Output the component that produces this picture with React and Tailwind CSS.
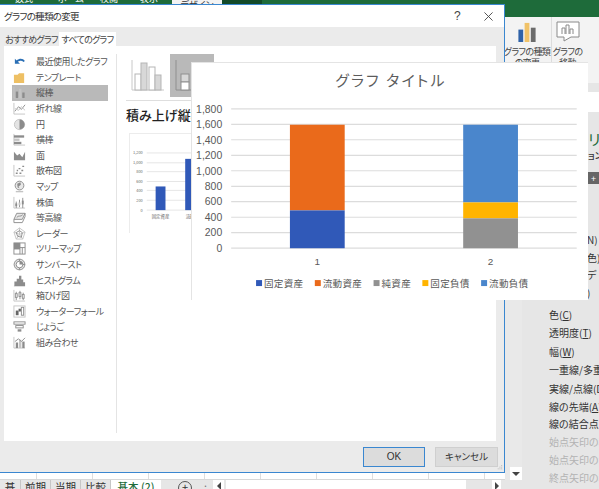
const jp = "font-['Noto_Sans_CJK_JP','Liberation_Sans',sans-serif] [font-feature-settings:'palt']"

const chartTypes = [
  { label: '最近使用したグラフ', icon: 'recent' },
  { label: 'テンプレート', icon: 'folder' },
  { label: '縦棒', icon: 'column', active: true },
  { label: '折れ線', icon: 'line' },
  { label: '円', icon: 'pie' },
  { label: '横棒', icon: 'bar' },
  { label: '面', icon: 'area' },
  { label: '散布図', icon: 'scatter' },
  { label: 'マップ', icon: 'map' },
  { label: '株価', icon: 'stock' },
  { label: '等高線', icon: 'contour' },
  { label: 'レーダー', icon: 'radar' },
  { label: 'ツリーマップ', icon: 'tree' },
  { label: 'サンバースト', icon: 'sun' },
  { label: 'ヒストグラム', icon: 'hist' },
  { label: '箱ひげ図', icon: 'box' },
  { label: 'ウォーターフォール', icon: 'water' },
  { label: 'じょうご', icon: 'funnel' },
  { label: '組み合わせ', icon: 'combo' },
]

const panelLabels = [
  { before: '色(', hot: 'C', after: ')', mt: 'mt-0' },
  { before: '透明度(', hot: 'T', after: ')', mt: 'mt-[4px]' },
  { before: '幅(', hot: 'W', after: ')', mt: 'mt-[5px]' },
  { before: '一重線/多重線', mt: 'mt-[4px]' },
  { before: '実線/点線(D)', mt: 'mt-[5px]' },
  { before: '線の先端(', hot: 'A', after: ')', mt: 'mt-[4px]' },
  { before: '線の結合点(J)', mt: 'mt-[3px]' },
  { before: '始点矢印の種類', mt: 'mt-[4px]', dim: true },
  { before: '始点矢印のサイズ', mt: 'mt-[4px]', dim: true },
  { before: '終点矢印の種類', mt: 'mt-[4px]', dim: true },
]

function ChartIcon({ name }) {
  const g = '#8c8c8c'
  const l = '#c4c4c4'
  const shapes = {
    recent: (
      <>
        <path d="M3 8.5 C5 4.5 10 4 12 7" fill="none" stroke="#2a6fb5" strokeWidth="2" />
        <path d="M2 4 V9.5 H7.5 Z" fill="#2a6fb5" />
      </>
    ),
    folder: <path d="M1 4 H5 L6.5 2.5 H12 V13 H1 Z" fill="#eec064" />,
    column: (
      <>
        <path d="M1 1 V13 H13" fill="none" stroke={l} />
        <rect x="3" y="6" width="2.5" height="7" fill={g} />
        <rect x="6.5" y="3" width="2.5" height="10" fill={l} />
        <rect x="10" y="7" width="2.5" height="6" fill={g} />
      </>
    ),
    line: (
      <>
        <path d="M1 1 V13 H13" fill="none" stroke={l} />
        <path d="M2 10 L6 5 L9 8 L13 3" fill="none" stroke={g} />
        <path d="M2 7 L6 9 L9 5 L13 9" fill="none" stroke={l} />
      </>
    ),
    pie: (
      <>
        <circle cx="7" cy="7" r="5.5" fill="#e4e4e4" stroke={l} />
        <path d="M7 7 V1.5 A5.5 5.5 0 0 1 7 12.5 Z" fill={g} />
      </>
    ),
    bar: (
      <>
        <path d="M1 1 V13 H13" fill="none" stroke={l} />
        <rect x="1" y="2.5" width="11" height="2.5" fill={g} />
        <rect x="1" y="6" width="6" height="2.5" fill={l} />
        <rect x="1" y="9.5" width="8" height="2.5" fill={g} />
      </>
    ),
    area: <path d="M1 12 V3 L4.5 7 L7 5 L10 9 L13 3 V12 Z" fill={g} />,
    scatter: (
      <>
        <path d="M1 1 V13 H13" fill="none" stroke={l} />
        <path d="M3 10 h2 M6 5 h2 M9 7 h2 M10 2.5 h2 M4 7 h1.5 M7 10 h2" stroke={g} strokeWidth="1.5" />
      </>
    ),
    map: (
      <>
        <circle cx="7" cy="6" r="4.7" fill="#e8e8e8" stroke={g} />
        <path d="M4.5 4 L8 2.5 L8.5 5 L6 7 L7 9 L5 8 Z" fill={g} />
        <path d="M3 12.5 H11" stroke={l} strokeWidth="1.5" />
      </>
    ),
    stock: (
      <>
        <path d="M1 1 V13 H13" fill="none" stroke={l} />
        <path d="M3.5 6 V13 M7 4 V12 M10.5 2 V13" stroke={g} />
        <rect x="2.5" y="8" width="2" height="3" fill={g} />
        <rect x="6" y="7" width="2" height="3" fill={l} />
        <rect x="9.5" y="5" width="2" height="4" fill={g} />
      </>
    ),
    contour: (
      <>
        <path d="M1 9 L4 2.5 H13 L10 9 Z" fill="#e8e8e8" stroke={g} />
        <path d="M1 9 V12.5 H10 L13 6 V2.5" fill="none" stroke={g} />
        <path d="M4 7 C6 4 8 7 10.5 4" fill="none" stroke={g} />
      </>
    ),
    radar: (
      <>
        <path d="M7 1 L13 5.5 L10.5 13 H3.5 L1 5.5 Z" fill="none" stroke={l} />
        <path d="M7 1 V8 M13 5.5 L7 8 M10.5 13 L7 8 M3.5 13 L7 8 M1 5.5 L7 8" stroke={l} />
        <path d="M7 4 L10 6 L9 11 L5 10 L3.5 6 Z" fill="none" stroke={g} />
      </>
    ),
    tree: (
      <>
        <rect x="1" y="1" width="12" height="12" fill="#fff" stroke={g} />
        <rect x="1" y="1" width="6.5" height="7" fill={g} />
        <path d="M7.5 1 V13 M7.5 6 H13 M10 6 V13" stroke={g} />
      </>
    ),
    sun: (
      <>
        <circle cx="7" cy="7" r="5.8" fill="#e0e0e0" stroke={g} />
        <circle cx="7" cy="7" r="3.6" fill="#fff" stroke={g} />
        <path d="M7 7 V3.4 A3.6 3.6 0 0 1 10.6 7 Z" fill={g} />
        <path d="M7 1.2 V3.4 M12.8 7 H10.6 M7 12.8 V10.6" stroke={g} />
      </>
    ),
    hist: (
      <>
        <path d="M1 13 H13" stroke={l} />
        <path d="M1.5 13 V8 H4 V5 H6.5 V2 H9 V6 H11 V9 H13 V13 Z" fill={g} />
      </>
    ),
    box: (
      <>
        <path d="M1 1 V13 H13" fill="none" stroke={l} />
        <path d="M3.5 3 V12 M7.5 2 V11 M11 4 V12" stroke={g} />
        <rect x="2.5" y="5" width="2" height="4" fill="#fff" stroke={g} />
        <rect x="6.5" y="4" width="2" height="4" fill="#fff" stroke={g} />
        <rect x="10" y="6" width="2" height="4" fill="#fff" stroke={g} />
      </>
    ),
    water: (
      <>
        <rect x="1" y="1" width="12" height="12" fill="#fff" stroke={l} />
        <rect x="3" y="6" width="3" height="5" fill="#666" />
        <rect x="6" y="4" width="2.5" height="3" fill="#666" />
        <rect x="9" y="2.5" width="2.5" height="8.5" fill="#fff" stroke={g} />
      </>
    ),
    funnel: (
      <>
        <rect x="1" y="2" width="12" height="2.5" fill="#fff" stroke={g} />
        <rect x="3" y="6" width="8" height="2.5" fill="#fff" stroke={g} />
        <rect x="5" y="10" width="4" height="2.5" fill={g} />
      </>
    ),
    combo: (
      <>
        <path d="M1 1 V13 H13" fill="none" stroke={l} />
        <rect x="3" y="7" width="2.5" height="6" fill={g} />
        <rect x="6.5" y="4" width="2.5" height="9" fill={l} />
        <rect x="10" y="6" width="2.5" height="7" fill={g} />
        <path d="M2 6 L6 3 L9 6 L13 2" fill="none" stroke={g} />
      </>
    ),
  }
  return (
    <svg viewBox="0 0 14 14" className="h-[13px] w-[13px] shrink-0">
      {shapes[name]}
    </svg>
  )
}

function TypeList() {
  return (
    <ul className="w-[112px] shrink-0 pl-2">
      {chartTypes.map((item) => (
        <li
          key={item.label}
          className={`flex h-[15.6px] w-[96px] items-center gap-[10px] pl-[1px] text-[9px] leading-none tracking-[-0.5px] text-[#555] ${item.active ? 'bg-[#b9b9b9] text-[#333]' : ''}`}
        >
          <ChartIcon name={item.icon} />
          <span className="whitespace-nowrap">{item.label}</span>
        </li>
      ))}
    </ul>
  )
}

function SubtypeIcon() {
  return (
    <svg viewBox="0 0 34 32" className="h-[32px] w-[34px]">
      <path d="M1 0 V30 H33" fill="none" stroke="#c8c8c8" />
      <rect x="4" y="14" width="6" height="16" fill="#fff" stroke="#b5b5b5" />
      <rect x="10" y="3" width="6" height="27" fill="#d8d8d8" stroke="#b5b5b5" />
      <rect x="18" y="7" width="6" height="23" fill="#fff" stroke="#b5b5b5" />
      <rect x="24" y="15" width="6" height="15" fill="#d8d8d8" stroke="#b5b5b5" />
    </svg>
  )
}

function StackedSubtypeIcon() {
  return (
    <svg viewBox="0 0 34 32" className="h-[32px] w-[34px]">
      <path d="M1 0 V30 H33" fill="none" stroke="#8f8f8f" />
      <rect x="6" y="14" width="8" height="8" fill="#d8d8d8" stroke="#8f8f8f" />
      <rect x="6" y="22" width="8" height="8" fill="#fff" stroke="#8f8f8f" />
    </svg>
  )
}

function PreviewChart() {
  const rows = [
    ['1,200', 149],
    ['1,000', 159],
    ['800', 168],
    ['600', 178],
    ['400', 187],
    ['200', 197],
    ['0', 207],
  ]
  return (
    <svg viewBox="130 130 70 100" className="mt-[9px] ml-[3px] h-[100px] w-[70px] border-t border-l border-[#ececec]">
      {rows.map(([label, y]) => (
        <g key={label}>
          <line x1="147" x2="200" y1={y} y2={y} stroke="#e6e6e6" />
          <text x="143" y={y + 1.5} textAnchor="end" fontSize="4" fill="#666">{label}</text>
        </g>
      ))}
      <rect x="156" y="183" width="10" height="24" fill="#3059b8" />
      <rect x="186" y="155" width="14" height="52" fill="#3059b8" />
      <text x="161" y="215.5" textAnchor="middle" fontSize="4.5" fill="#666">固定資産</text>
      <text x="191" y="215.5" textAnchor="middle" fontSize="4.5" fill="#666">流動</text>
    </svg>
  )
}

function Dialog() {
  return (
    <div className={`absolute top-[4px] left-[-2px] flex h-[469px] w-[507px] flex-col border-[1.5px] border-[#3a87d0] bg-[#ebebeb] ${jp}`}>
      <div className="flex h-[22px] shrink-0 items-center justify-between bg-white pl-[5px] pr-[11px] text-[9.5px] tracking-[-0.7px] text-[#333]">
        <span>グラフの種類の変更</span>
        <div className="flex items-center gap-[24px]">
          <span className="font-['Liberation_Sans',sans-serif] text-[12px] leading-none text-[#444]">?</span>
          <svg viewBox="0 0 10 10" className="h-[9px] w-[9px]">
            <path d="M0.5 0.5 L9.5 9.5 M9.5 0.5 L0.5 9.5" stroke="#444" strokeWidth="1" />
          </svg>
        </div>
      </div>

      <div className="flex h-[19px] shrink-0 items-end pl-[5px] pt-[5px] text-[9px] leading-none tracking-[-0.7px] whitespace-nowrap text-[#444]">
        <span className="flex h-[13px] w-[55px] items-center justify-center">おすすめグラフ</span>
        <span className="flex h-[14px] w-[57px] items-center justify-center bg-white">すべてのグラフ</span>
      </div>

      <div className="mx-[5px] flex h-[395px] w-[492px] shrink-0 bg-white py-[8px]">
        <TypeList />
        <div className="border-l border-[#e4e4e4] pl-[9px]">
          <div className="flex h-[47px] w-[360px] items-start gap-[5px] border-b border-[#dedede] pl-[5px]">
            <div className="mt-[6px]">
              <SubtypeIcon />
            </div>
            <div className="flex h-[43px] w-[44px] items-center justify-center bg-[#b9b9b9]">
              <StackedSubtypeIcon />
            </div>
          </div>
          <h2 className="mt-[5px] text-[13px] font-medium leading-[18px] text-[#222]">積み上げ縦棒</h2>
          <PreviewChart />
        </div>
      </div>

      <div className="relative flex grow items-center justify-end gap-[10px] pr-[6px] text-[9.5px] text-[#333]">
        <button className="flex h-[20px] w-[62px] items-center justify-center border-[1.5px] border-[#3a87d0] bg-[#dcdcdc] font-['Liberation_Sans',sans-serif] text-[10px]">OK</button>
        <button className="flex h-[20px] w-[63px] items-center justify-center border border-[#cfcfcf] bg-[#dcdcdc]">キャンセル</button>
        <svg viewBox="0 0 8 8" className="absolute right-[1px] bottom-[1px] h-[7px] w-[7px]">
          <path d="M6 1h1v1H6z M4 3h1v1H4z M6 3h1v1H6z M2 5h1v1H2z M4 5h1v1H4z M6 5h1v1H6z" fill="#a8a8a8" />
        </svg>
      </div>
    </div>
  )
}

function StackedChart() {
  const gridY = [108, 123.6, 139.1, 154.7, 170.2, 185.8, 201.3, 216.9, 232.4, 248]
  const labels = ['1,800', '1,600', '1,400', '1,200', '1,000', '800', '600', '400', '200', '0']
  const legend = [
    ['#3059b8', '固定資産', 255],
    ['#ea6a1b', '流動資産', 314],
    ['#919191', '純資産', 373],
    ['#ffb400', '固定負債', 422],
    ['#4a86cc', '流動負債', 481],
  ]
  return (
    <div className={`absolute top-[62px] left-[191px] h-[238px] w-[397px] border-t border-l border-[#e4e4e4] bg-white ${jp}`}>
      <svg viewBox="191 62 397 238" className="h-full w-full">
        <text x="390.5" y="85.5" textAnchor="middle" fontSize="15" letterSpacing="2.2" fill="#5c5c5c">グラフ タイトル</text>
        {gridY.map((y, i) => (
          <g key={y}>
            <line x1="230" x2="577" y1={y} y2={y} stroke="#dcdcdc" strokeWidth="1.2" />
            <text x="221" y={y + 3.8} textAnchor="end" fontSize="10.5" fill="#595959" fontFamily="Liberation Sans, sans-serif">{labels[i]}</text>
          </g>
        ))}
        <rect x="289" y="124" width="55" height="86" fill="#ea6a1b" />
        <rect x="289" y="210" width="55" height="38" fill="#3059b8" />
        <rect x="463" y="124" width="55" height="78" fill="#4a86cc" />
        <rect x="463" y="202" width="55" height="16" fill="#ffb400" />
        <rect x="463" y="218" width="55" height="30" fill="#919191" />
        <text x="316.5" y="265" textAnchor="middle" fontSize="10" fill="#595959" fontFamily="Liberation Sans, sans-serif">1</text>
        <text x="490.5" y="265" textAnchor="middle" fontSize="10" fill="#595959" fontFamily="Liberation Sans, sans-serif">2</text>
        {legend.map(([color, label, x]) => (
          <g key={label}>
            <rect x={x} y="280" width="6" height="6" fill={color} />
            <text x={x + 8} y="287" fontSize="9.6" letterSpacing="0.3" fill="#595959">{label}</text>
          </g>
        ))}
      </svg>
    </div>
  )
}

function ExcelBackground() {
  return (
    <div className={`flex h-[489px] w-[599px] flex-col bg-[#f3f3f3] ${jp}`}>
      <div className="flex h-[17px] shrink-0 bg-[#1e6b3a] text-[9px] leading-[10px] text-white">
        <span className="mt-[-6px] ml-[15px] w-[43px]">数式</span>
        <span className="mt-[-6px] w-[42px]">ホーム</span>
        <span className="mt-[-6px] w-[40px]">校閲</span>
        <span className="mt-[-6px] w-[32px]">表示</span>
        <span className="h-[4px] w-[50px] overflow-hidden bg-[#f3f3f3] text-center text-[#333]">デザイン</span>
        <span className="h-[4px] w-[40px] bg-[#134a28]" />
      </div>

      <div className="flex h-[66px] shrink-0 justify-end overflow-hidden pr-[16px] text-[9px] leading-[10px] tracking-[-0.6px] text-[#444]">
        <div className="flex w-[49px] flex-col items-center border-r border-[#dcdcdc] pt-[4px]">
          <svg viewBox="0 0 20 22" className="h-[21px] w-[20px]">
            <rect x="1" y="9" width="5" height="13" fill="#2f62a8" />
            <rect x="7.5" y="2" width="5" height="20" fill="#f0c268" />
            <rect x="14" y="7" width="5" height="15" fill="#6b6b6b" />
          </svg>
          <span className="mt-[5px] whitespace-nowrap">グラフの種類</span>
          <span className="mt-[1px] whitespace-nowrap">の変更</span>
        </div>
        <div className="flex w-[31px] flex-col items-center pt-[4px]">
          <svg viewBox="0 0 24 22" className="h-[22px] w-[24px]">
            <path d="M1 1 H23 V16 L15 16 L8 20 V16 H1 Z" fill="#fff" stroke="#8a8a8a" />
            <path d="M6 13 V7 H9 V13 M10 13 V4 H13 V13 M14 13 V8 H17 V13" fill="none" stroke="#8a8a8a" />
          </svg>
          <span className="mt-[4px] whitespace-nowrap">グラフの</span>
          <span className="mt-[1px] whitespace-nowrap">移動</span>
        </div>
      </div>

      <div className="h-[9px] shrink-0 bg-[#e6e6e6]" />
      <div className="h-[20px] shrink-0 bg-white" />

      <div className="flex min-h-0 grow">
        <div className="flex w-[522px] shrink-0 flex-col">
          <div className="flex grow justify-end bg-[#e9e9e9]">
            <div className="mt-[355px] flex h-[13px] w-[12px] items-center justify-center bg-white">
              <span className="h-0 w-0 border-x-[4px] border-t-[4px] border-x-transparent border-t-[#444]" />
            </div>
          </div>
        </div>
        <div className="grow bg-[#e6e6e6] pl-[27px] text-[10px] leading-[14px] whitespace-nowrap text-[#333]">
          <p className="mt-[18px] ml-[39px] text-[15px] leading-[18px] text-[#1e6b3a]">リア</p>
          <p className="mt-[2px] ml-[39px] text-[9px] leading-[12px] font-medium">ョン</p>
          <p className="mt-[10px] ml-[39px] flex h-[12px] w-[11px] items-center justify-center bg-[#666] text-[9px] leading-none text-white">+</p>
          <div className="mt-[49px] flex flex-col gap-[3.5px]">
            <p className="h-[14px] pl-[38px]">N)</p>
            <p className="h-[14px] pl-[38px]">色)</p>
            <p className="h-[14px] pl-[38px]">デ</p>
            <p className="h-[14px] pl-[38px]">)</p>
          </div>
          <div className="mt-[8.5px] flex flex-col">
            {panelLabels.map((row) => (
              <p key={row.before} className={`${row.mt} ${row.dim ? 'text-[#b3b3b3]' : ''}`}>
                {row.before}
                {row.hot ? <span className="underline">{row.hot}</span> : null}
                {row.after}
              </p>
            ))}
          </div>
        </div>
      </div>
    </div>
  )
}

function SheetFooter() {
  const tabs = ['基本', '前期', '当期', '比較']
  return (
    <div className={`absolute bottom-0 left-0 w-[522px] ${jp}`}>
      <div className="grid h-[7px] w-[505px] grid-cols-[37px_56px_56px_56px_56px_56px_56px_56px_56px] border-b border-[#d8d8d8] bg-white">
        {Array.from({ length: 9 }, (_, i) => (
          <span key={i} className="border-r border-[#dedede]" />
        ))}
      </div>
      <div className="flex h-[9px] overflow-hidden bg-[#e6e6e6] text-[10.5px] leading-[13px] text-[#333]">
        {tabs.map((tab, i) => (
          <span key={tab} className={`border-r border-[#c6c6c6] text-center ${i === 0 ? 'w-[21px]' : 'w-[30px]'}`}>{tab}</span>
        ))}
        <span className="w-[50px] bg-white text-center font-medium text-[#1e6b3a]">基本 (2)</span>
        <span className="mt-[1px] ml-[17px] flex h-[14px] w-[14px] justify-center rounded-full border border-[#555] text-[11px] leading-[11px]">+</span>
        <span className="ml-[12px] w-[6px] text-[#777]">:</span>
        <span className="ml-[3px] flex w-[11px] items-start justify-center bg-white pt-[2px]">
          <span className="h-0 w-0 border-y-[4px] border-r-[4px] border-y-transparent border-r-[#444]" />
        </span>
        <span className="ml-[2px] w-[240px] bg-white" />
        <span className="w-[26px]" />
        <span className="flex w-[9px] items-start justify-center bg-white pt-[2px]">
          <span className="h-0 w-0 border-y-[4px] border-l-[4px] border-y-transparent border-l-[#444]" />
        </span>
      </div>
    </div>
  )
}

export default function App() {
  return (
    <div className="relative h-[489px] w-[599px] overflow-hidden">
      <ExcelBackground />
      <SheetFooter />
      <Dialog />
      <StackedChart />
    </div>
  )
}
